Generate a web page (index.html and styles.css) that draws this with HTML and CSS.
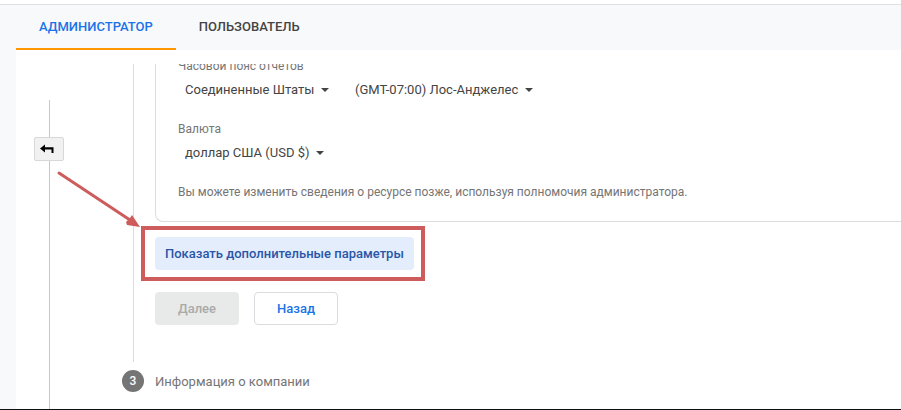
FILE: index.html
```html
<!DOCTYPE html>
<html lang="ru">

<head>
    <title>Администратор</title>
    <meta charset="utf-8">
    <meta name="viewport" content="width=device-width, initial-scale=1">
    <link rel="stylesheet" href="styles.css">
</head>

<body>
    <nav class="tabs">
        <a class="tab active" href="#admin">АДМИНИСТРАТОР</a>
        <a class="tab" href="#user">ПОЛЬЗОВАТЕЛЬ</a>
    </nav>

    <main class="panel">
        <div class="rail">
            <button class="back" type="button" aria-label="Вернуться">
                <svg width="14" height="10" viewBox="0 0 14 10">
                    <path d="M0 4.500 L5 0.500 V3.300 H13.500 V9 H11.500 V5.500 H5 V8.500 Z" fill="#000" />
                </svg>
            </button>
        </div>

        <form class="steps">
            <div class="step">
                <div class="card">
                    <label class="caption" for="country">Часовой пояс отчетов</label>
                    <div class="row">
                        <span class="drop"><select id="country"><option>Соединенные Штаты</option></select></span>
                        <span class="drop"><select aria-label="Часовой пояс"><option>(GMT-07:00) Лос-Анджелес</option></select></span>
                    </div>
                    <label class="caption" for="currency">Валюта</label>
                    <div class="row">
                        <span class="drop"><select id="currency"><option>доллар США (USD $)</option></select></span>
                    </div>
                    <p class="note">Вы можете изменить сведения о ресурсе позже, используя полномочия администратора.</p>
                </div>

                <div class="callout">
                    <button class="btn more" type="button">Показать дополнительные параметры</button>
                    <svg class="arrow" width="84" height="58" viewBox="0 0 84 58">
                        <path d="M2 3 L73 50" stroke="#cd5c5c" stroke-width="3" stroke-linecap="round" />
                        <path d="M83 57 L75 45 L73 48 L69 52 L70 55 Z" fill="#cd5c5c" />
                    </svg>
                </div>

                <div class="actions">
                    <button class="btn" type="button" disabled>Далее</button>
                    <button class="btn outline" type="button">Назад</button>
                </div>
            </div>

            <div class="next">
                <span class="number">3</span>
                <span>Информация о компании</span>
            </div>
        </form>
    </main>
</body>

</html>
```
FILE: styles.css
```css
* {
    box-sizing: border-box;
}

body {
    margin: 0;
    min-height: 100vh;
    display: flex;
    flex-direction: column;
    background-color: #f8f9fb;
    border-top: 4px solid #fff;
    border-bottom: 1px solid #111;
    font-family: Roboto, "Liberation Sans", sans-serif;
    font-size: 13px;
    color: #444;
}

.tabs {
    display: flex;
    height: 46px;
    padding-left: 16px;
    border-top: 1px solid #dfe1e5;
}

.tab {
    padding: 0 23px;
    line-height: 44px;
    font-weight: 500;
    color: #444;
    text-decoration: none;
}

.tab.active {
    border-bottom: 2px solid #ff9800;
    color: #1a73e8;
}

.panel {
    flex: 1;
    display: flex;
    margin-left: 16px;
    padding-top: 14px;
    background-color: #fff;
}

.rail {
    display: flex;
    flex-direction: column;
    align-items: center;
    width: 66px;
    padding-top: 36px;
}

.rail::before,
.rail::after {
    content: "";
    width: 1px;
    height: 37px;
    background-color: #c8c8c8;
}

.rail::after {
    flex: 1;
}

.back {
    display: flex;
    align-items: center;
    justify-content: center;
    width: 30px;
    height: 24px;
    padding: 0 4px 0 0;
    border: 1px solid #d8d8d8;
    border-radius: 2px;
    background-color: #f1f1f1;
}

.steps {
    flex: 1;
    margin-left: 51px;
}

.step {
    padding: 0 0 37px 21px;
    border-left: 1px solid #dadce0;
}

.card {
    overflow: hidden;
    padding: 0 22px 21px;
    border: 1px solid #dadce0;
    border-width: 0 0 1px 1px;
    border-radius: 0 0 0 8px;
}

.caption {
    display: block;
    height: 16px;
    line-height: 16px;
    font-size: 12px;
    color: #757575;
}

.caption:first-child {
    margin-top: -6px;
}

.row {
    display: flex;
    gap: 26px;
    height: 47px;
    padding: 3px 0 0 7px;
}

.drop {
    position: relative;
    height: 24px;
}

.drop select {
    height: 24px;
    padding: 0 14px 0 0;
    border: 0;
    appearance: none;
    background: none;
    font: inherit;
    color: #444;
}

.drop::after {
    content: "";
    position: absolute;
    right: 0;
    top: 11px;
    border: 4px solid transparent;
    border-top-color: #444;
    border-bottom: 0;
    pointer-events: none;
}

.note {
    margin: 0;
    line-height: 16px;
    font-size: 12px;
    color: #757575;
}

.btn {
    height: 33px;
    min-width: 84px;
    padding: 0 9px;
    border: 1px solid transparent;
    border-radius: 4px;
    font: 500 13px Roboto, "Liberation Sans", sans-serif;
}

.btn:disabled {
    background-color: #e8eae9;
    color: #aaa;
}

.more {
    background-color: #e4edfc;
    color: #2a56a8;
}

.outline {
    border-color: #dadce0;
    background-color: #fff;
    color: #1a73e8;
}

.callout {
    position: relative;
    width: fit-content;
    margin-top: 15px;
}

/* red frame around the button */
.callout::after {
    content: "";
    position: absolute;
    inset: -11px -11px -11px -14px;
    border: 4px solid #cd5c5c;
    pointer-events: none;
}

.arrow {
    position: absolute;
    right: 100%;
    bottom: 100%;
    margin: 0 14px 9px 0;
    pointer-events: none;
}

.actions {
    display: flex;
    gap: 15px;
    margin-top: 22px;
}

.next {
    display: flex;
    align-items: center;
    gap: 11px;
    margin: 8px 0 16px -11px;
    color: #757575;
}

.number {
    width: 22px;
    border-radius: 50%;
    background-color: #757575;
    line-height: 22px;
    text-align: center;
    font-size: 12px;
    font-weight: 500;
    color: #fff;
}
```
